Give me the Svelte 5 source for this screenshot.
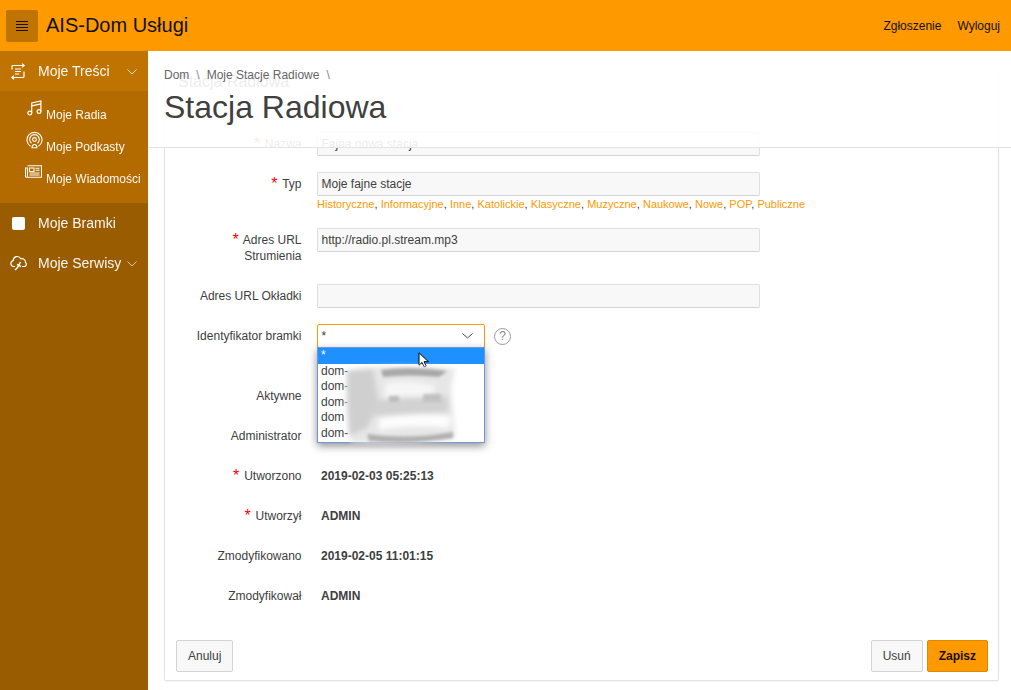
<script>
  const navTop = { label: 'Moje Treści' };
  const subs = [
    { label: 'Moje Radia', icon: 'music' },
    { label: 'Moje Podkasty', icon: 'pod' },
    { label: 'Moje Wiadomości', icon: 'news' }
  ];
  const tags = ['Historyczne','Informacyjne','Inne','Katolickie','Klasyczne','Muzyczne','Naukowe','Nowe','POP','Publiczne'];
  const statics = [
    { label: 'Utworzono', req: true, value: '2019-02-03 05:25:13' },
    { label: 'Utworzył', req: true, value: 'ADMIN' },
    { label: 'Zmodyfikowano', req: false, value: '2019-02-05 11:01:15' },
    { label: 'Zmodyfikował', req: false, value: 'ADMIN' }
  ];
  const options = ['dom-', 'dom-', 'dom-', 'dom', 'dom-'];
</script>

<div class="page">
  <header class="top">
    <button class="burger" aria-label="menu">
      <svg width="12" height="10" viewBox="0 0 12 10"><path d="M0 .5h12M0 3.5h12M0 6.5h12M0 9.5h12" stroke="#1a1000" stroke-width="1"/></svg>
    </button>
    <div class="brand">AIS-Dom Usługi</div>
    <nav class="toplinks"><span>Zgłoszenie</span><span>Wyloguj</span></nav>
  </header>
  <div class="body">
    <aside class="side">
      <div class="item open">
        <span class="ico">
          <svg width="16" height="17" viewBox="0 0 16 17" fill="none" stroke="#fff" stroke-width="1.2"><path d="M2 6.500V3.500q0-1 1-1h11M12 .6l2.200 1.900L12 4.400M14 8.500V13.500q0 1-1 1H2M4 12.600 1.800 14.500 4 16.400M5 6h6M5 8.500h6M5 11h4"/></svg>
        </span>
        <span class="lbl">{navTop.label}</span>
        <svg class="chev" width="10" height="6" viewBox="0 0 10 6" fill="none" stroke="#fff" stroke-opacity=".8"><path d="M.5.500l4.500 4.500 4.500-4.500"/></svg>
      </div>
      <div class="subs">
        {#each subs as s}
          <div class="sub">
            <span class="subico">
              {#if s.icon === 'music'}
                <svg width="15" height="16" viewBox="0 0 15 16" fill="none" stroke="#fff" stroke-width="1.200"><circle cx="2.800" cy="13" r="1.900"/><circle cx="12" cy="11.500" r="1.900"/><path d="M4.700 13V3L13.900 1V11.500M4.700 5.800l9.200-2"/></svg>
              {:else if s.icon === 'pod'}
                <svg class="podico" width="17" height="19" viewBox="0 0 17 19" fill="none" stroke="#fff" stroke-width="1.1"><path d="M4.500 15.200a7.500 7.500 0 1 1 8 0"/><path d="M5.500 12.200a4.800 4.800 0 1 1 6 0"/><circle cx="8.500" cy="8.500" r="1.900"/><path d="M6 16.800q0-3.300 2.500-3.300t2.500 3.300z" fill="none"/></svg>
              {:else}
                <svg class="newsico" width="17" height="13" viewBox="0 0 17 13" fill="none" stroke="#fff" stroke-width="1.1"><path d="M2.500.700h14v11.600H1.500q-1 0-1-1V3h2v8.500M4.500 3h4.500v3.500H4.500zM10.500 3.300h4M10.500 5.300h4M4.500 8h10M4.500 10h10"/></svg>
              {/if}
            </span>
            <span class="sublbl">{s.label}</span>
          </div>
        {/each}
      </div>
      <div class="item">
        <span class="ico"><span class="square"></span></span>
        <span class="lbl">Moje Bramki</span>
      </div>
      <div class="item">
        <span class="ico">
          <svg width="17" height="16" viewBox="0 0 17 16" fill="none" stroke="#fff" stroke-width="1.2"><path d="M5 11.500H3.500a3 3 0 0 1-.3-5.900 4 4 0 0 1 7.600-1.800 3.600 3.600 0 0 1 4.700 3.700 2.300 2.300 0 0 1-1 4H12"/><path d="M10.500 7 7.500 12.500 5 15M7 9.500l4 2" stroke-width="1.400"/></svg>
        </span>
        <span class="lbl">Moje Serwisy</span>
        <svg class="chev" width="10" height="6" viewBox="0 0 10 6" fill="none" stroke="#fff" stroke-opacity=".65"><path d="M.5.500l4.500 4.500 4.500-4.500"/></svg>
      </div>
    </aside>
    <main class="main">
      <section class="card">
        <h2 class="cardtitle">Stacja Radiowa</h2>
        <div class="row">
          <label class="lab"><span class="req">*</span> Nazwa</label>
          <div class="input">Fajna nowa stacja</div>
        </div>
        <div class="row tall">
          <label class="lab"><span class="req">*</span> Typ</label>
          <div class="field">
            <div class="input">Moje fajne stacje</div>
            <div class="tags">
              {#each tags as t, i}<span class="tag">{t}</span>{i < tags.length - 1 ? ', ' : ''}{/each}
            </div>
          </div>
        </div>
        <div class="row tall">
          <label class="lab two"><span class="req">*</span> Adres URL<br />Strumienia</label>
          <div class="input">http://radio.pl.stream.mp3</div>
        </div>
        <div class="row">
          <label class="lab">Adres URL Okładki</label>
          <div class="input"></div>
        </div>
        <div class="row selrow">
          <label class="lab">Identyfikator bramki</label>
          <div class="selwrap">
            <div class="select">*
              <svg class="selchev" width="11" height="6" viewBox="0 0 11 6" fill="none" stroke="#444" stroke-width="1"><path d="M.5.500l5 4.500 5-4.500"/></svg>
            </div>
            <div class="drop">
              <div class="opt sel">*</div>
              {#each options as o}<div class="opt">{o}</div>{/each}
              <svg class="cursor" width="13" height="16" viewBox="0 0 13 16"><path d="M1 .8v12.500l3-2.800 2.200 4.500 2-1-2.200-4.300h4.400z" fill="#fff" stroke="#000" stroke-width="1"/></svg>
              <svg class="smear" width="124" height="94" viewBox="0 0 124 94">
                <defs>
                  <filter id="b3" x="-20%" y="-20%" width="140%" height="140%"><feGaussianBlur stdDeviation="2.500"/></filter>
                  <filter id="b1" x="-20%" y="-80%" width="140%" height="260%"><feGaussianBlur stdDeviation="1.800"/></filter>
                </defs>
                <g filter="url(#b3)">
                  <path d="M8 14 Q55 7 116 13 L112 30 L116 82 Q60 90 12 86 Q4 50 8 14Z" fill="#e6e6e6"/>
                  <path d="M8 15 L34 13 L40 48 L28 72 L10 80 Z" fill="#cfcfcf"/>
                  <path d="M46 27 Q70 23 96 30 L92 42 Q70 38 46 42Z" fill="#f6f6f6"/>
                  <path d="M40 62 Q80 56 112 60 L110 72 Q70 68 40 74Z" fill="#fdfdfd"/>
                  <path d="M34 44 L108 40 L110 56 L36 60Z" fill="#d2d2d2"/>
                </g>
                <g filter="url(#b1)">
                  <path d="M42 14 Q70 10 108 15 L100 21 Q70 18 44 21Z" fill="#a8a8a8"/>
                  <path d="M28 78 Q70 84 114 76 L114 82 Q70 89 30 85Z" fill="#b0b0b0"/>
                  <path d="M84 38 h18 v8 h-18z" fill="#c2c2c2"/>
                  <path d="M50 40 h10 v6 h-10z" fill="#bcbcbc"/>
                </g>
              </svg>
            </div>
          </div>
          <span class="help">?</span>
        </div>
        <div class="row"><label class="lab">Aktywne</label></div>
        <div class="row"><label class="lab">Administrator</label></div>
        {#each statics as r}
          <div class="row">
            <label class="lab">{#if r.req}<span class="req">*</span>{' '}{/if}{r.label}</label>
            <div class="val">{r.value}</div>
          </div>
        {/each}
        <div class="actions">
          <button class="btn">Anuluj</button>
          <div class="right">
            <button class="btn">Usuń</button>
            <button class="btn hot">Zapisz</button>
          </div>
        </div>
      </section>
      <div class="stick">
        <div class="crumbs">
          <span>Dom</span><span class="sep">\</span><span>Moje Stacje Radiowe</span><span class="sep">\</span>
        </div>
        <h1>Stacja Radiowa</h1>
      </div>
    </main>
  </div>
</div>

<style>
  :global(body) { margin: 0; background: #fff; font-family: "Liberation Sans", Arial, sans-serif; }
  .page { width: 1011px; height: 690px; overflow: hidden; display: flex; flex-direction: column; }
  .top { height: 51px; background: #ff9900; display: flex; align-items: center; color: #111; flex: none; }
  .burger { width: 32px; height: 32px; margin: 0 8px 0 6px; padding: 0; border: 0; border-radius: 2px; background: #bf7300; display: flex; align-items: center; justify-content: center; }
  .brand { font-size: 20px; color: #111; }
  .toplinks { margin-left: auto; display: flex; gap: 16px; font-size: 12px; padding-right: 11px; }
  .body { display: flex; flex: 1; min-height: 0; }
  .side { width: 148px; flex: none; background: #995c00; color: #fff; }
  .item { height: 40px; display: flex; align-items: center; font-size: 14px; position: relative; }
  .item.open { background: #bf7300; }
  .ico { width: 38px; flex: none; display: flex; justify-content: center; padding-right: 2px; box-sizing: border-box; }
  .lbl { color: #fff; opacity: .95; }
  .chev { position: absolute; left: 127px; top: 18px; }
  .square { width: 13px; height: 13px; background: #fff; border-radius: 2px; }
  .subs { background: #b36b00; padding: 9px 0 0; height: 112px; box-sizing: border-box; }
  .sub { height: 32px; display: flex; position: relative; font-size: 12px; }
  .subico { width: 46px; flex: none; display: flex; justify-content: flex-end; padding: 0 4px 0 0; box-sizing: border-box; height: 20px; align-items: flex-start; }
  .podico { margin-top: -1px; margin-right: -1px; }
  .newsico { margin-top: 1px; }
  .sublbl { padding-top: 8px; color: #fff; opacity: .95; }
  .main { flex: 1; position: relative; padding: 16px 12px 0 16px; background: #fff; min-width: 0; }
  .card { height: 614px; border: 1px solid #e3e3e3; border-radius: 2px; box-shadow: 0 1px 1px #0000000a; box-sizing: border-box; padding-top: 5px; }
  .cardtitle { margin: 0 0 41px 13px; font-size: 16px; font-weight: 400; color: #404040; line-height: 18px; }
  .row { display: flex; height: 40px; }
  .row.tall { height: 56px; }
  .row.selrow { height: 60px; }
  .lab { width: 136.500px; flex: none; text-align: right; font-size: 12px; color: #404040; line-height: 24px; }
  .lab.two { line-height: 16px; padding-top: 4px; }
  .req { color: #f00; font-size: 16px; line-height: 12px; vertical-align: -1px; margin-right: 1.500px; }
  .field { display: block; }
  .input { width: 443px; height: 24px; margin-left: 15.500px; border: 1px solid #dfdfdf; border-bottom-color: #d4d4d4; border-radius: 2px; background: #f8f8f8; box-sizing: border-box; font-size: 12px; line-height: 22px; padding-left: 3.500px; color: #404040; }
  .tags { margin: 0 0 0 15.500px; font-size: 11px; line-height: 16px; color: #404040; white-space: nowrap; word-spacing: .1px; }
  .tag { color: #ff9900; }
  .selwrap { position: relative; margin-left: 15.500px; width: 168px; }
  .select { width: 168px; height: 24px; border: 1px solid #ff9900; border-radius: 2px; box-sizing: border-box; font-size: 12px; line-height: 23px; padding-left: 3.500px; color: #404040; background: #fff; position: relative; }
  .selchev { position: absolute; right: 11px; top: 8px; }
  .drop { position: absolute; left: 0; top: 23px; width: 168px; height: 96px; box-sizing: border-box; border: 1px solid #7095d8; background: #fff; box-shadow: 0 3px 8px #00000070; z-index: 2; overflow: visible; font-size: 12px; color: #404040; }
  .opt { height: 15.500px; line-height: 15.500px; padding-left: 3px; }
  .opt.sel { background: #1e90ff; color: #fff; }
  .smear { position: absolute; left: 21px; top: 8px; }
  .cursor { position: absolute; left: 100px; top: 4px; }
  .help { width: 15px; height: 15px; margin: 4px 0 0 9px; border: 1px solid #999; border-radius: 50%; font-size: 12px; line-height: 15px; text-align: center; color: #888; }
  .val { margin-left: 19.500px; font-size: 12px; font-weight: 700; line-height: 24px; color: #404040; }
  .actions { display: flex; justify-content: space-between; padding: 0 10px 0 11px; margin-top: 16px; }
  .right { display: flex; gap: 4px; }
  .btn { height: 32px; border: 1px solid #d3d3d3; border-radius: 2px; background: #f8f8f8; font: 12px "Liberation Sans", Arial, sans-serif; color: #404040; padding: 0 11px; }
  .btn.hot { background: #ff9900; border-color: #e08700; color: #1a1000; font-weight: 700; }
  .stick { position: absolute; left: 0; right: 0; top: 0; height: 97px; box-sizing: border-box; background: #ffffffe6; border-bottom: 1px solid #e4e4e4; padding: 17px 0 0 16px; z-index: 1; color: #404040; }
  .crumbs { font-size: 12px; line-height: 14px; color: #666; display: flex; }
  .sep { margin: 0 7px; color: #888; }
  h1 { margin: 4px 0 0; font-size: 32px; font-weight: 400; line-height: 42px; color: #404040; }
</style>
